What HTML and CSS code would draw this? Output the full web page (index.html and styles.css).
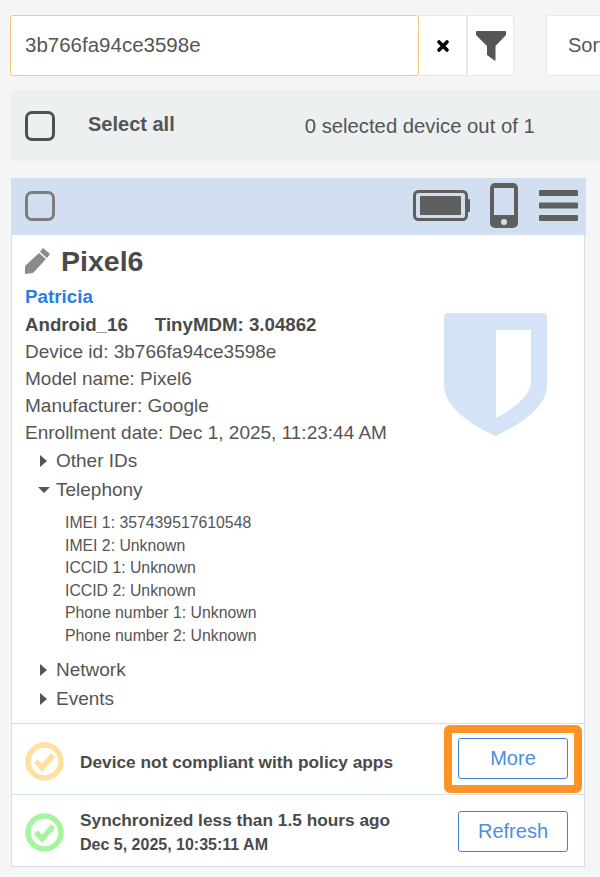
FILE: index.html
```html
<!DOCTYPE html>
<html lang="en">
<head>
    <meta charset="UTF-8">
    <meta name="viewport" content="width=device-width, initial-scale=1.0">
    <title>Devices</title>
    <link rel="stylesheet" href="styles.css">
</head>
<body>
    <div class="search-row">
        <input class="search-input" type="text" value="3b766fa94ce3598e">
        <button class="search-btn clear-btn">
            <svg width="14" height="14" viewBox="0 0 14 14"><path d="M3 3 L11 11 M11 3 L3 11" stroke="#000" stroke-width="3.6" stroke-linecap="round"/></svg>
        </button>
        <button class="search-btn filter-btn">
            <svg width="30" height="30" viewBox="0 0 30 30"><path d="M0 1 Q0 0 1 0 H29 Q30 0 30 1 V4 L19.500 15 V29 Q19.500 30 18.500 29.500 L11 24 V15 L0 4 Z" fill="#555"/></svg>
        </button>
        <div class="sort-box">Sort by</div>
    </div>

    <div class="select-bar">
        <span class="checkbox dark"></span>
        <strong class="select-all">Select all</strong>
        <span class="select-count">0 selected device out of 1</span>
    </div>

    <div class="card">
        <div class="card-header">
            <span class="checkbox"></span>
            <div class="header-icons">
                <svg class="battery-icon" width="57" height="31" viewBox="0 0 57 31"><rect x="1.500" y="1.500" width="52" height="28" rx="4" fill="none" stroke="#5f5f5f" stroke-width="3"/><rect x="7" y="6" width="41" height="19" fill="#5f5f5f"/><path d="M54 9 h2 q1 0 1 1 v11 q0 1 -1 1 h-2 z" fill="#5f5f5f"/></svg>
                <svg width="28" height="45" viewBox="0 0 28 45"><rect width="28" height="45" rx="5" fill="#5f5f5f"/><rect x="4" y="5" width="20" height="27" fill="#d2dff0"/><circle cx="14" cy="39" r="3" fill="#d2dff0"/></svg>
                <svg class="menu-icon" width="39" height="31" viewBox="0 0 39 31"><rect width="39" height="6" rx="1" fill="#5f5f5f"/><rect y="12.500" width="39" height="6" rx="1" fill="#5f5f5f"/><rect y="25" width="39" height="6" rx="1" fill="#5f5f5f"/></svg>
            </div>
        </div>

        <div class="card-body">
            <svg class="shield" width="103" height="123" viewBox="0 0 103 123"><path fill-rule="evenodd" d="M4 0 H99 Q103 0 103 4 V72 C103 95 75 112 51.500 123 C28 112 0 95 0 72 V4 Q0 0 4 0 Z M52 17 V105 C68 96 87 84 87 68 V17 Z" fill="#d5e3f6"/></svg>

            <h2 class="device-name">
                <svg width="25" height="26" viewBox="0 0 25 26"><path d="M18 0 L25 6 L22 10 L15 4 Z M14 5 L21 11 L8 25 L0 26 L0 18 Z" fill="#8a8a8a"/></svg>
                Pixel6
            </h2>
            <div class="user-name">Patricia</div>
            <div class="info-line info-bold"><span>Android_16</span><span>TinyMDM: 3.04862</span></div>
            <div class="info-line">Device id: 3b766fa94ce3598e</div>
            <div class="info-line">Model name: Pixel6</div>
            <div class="info-line">Manufacturer: Google</div>
            <div class="info-line">Enrollment date: Dec 1, 2025, 11:23:44 AM</div>

            <div class="section"><span class="arrow-right"></span>Other IDs</div>
            <div class="section"><span class="arrow-down"></span>Telephony</div>
            <ul class="section-items">
                <li>IMEI 1: 357439517610548</li>
                <li>IMEI 2: Unknown</li>
                <li>ICCID 1: Unknown</li>
                <li>ICCID 2: Unknown</li>
                <li>Phone number 1: Unknown</li>
                <li>Phone number 2: Unknown</li>
            </ul>
            <div class="section"><span class="arrow-right"></span>Network</div>
            <div class="section"><span class="arrow-right"></span>Events</div>
        </div>

        <div class="status-row">
            <svg class="status-icon" width="39" height="39" viewBox="0 0 39 39"><circle cx="19.500" cy="19.500" r="16.500" fill="#fff" stroke="#ffe0a0" stroke-width="5.500"/><path d="M11 19 L17 26 L28 13" fill="none" stroke="#ffe0a0" stroke-width="5.500"/></svg>
            <div class="status-text"><strong>Device not compliant with policy apps</strong></div>
            <button class="action-btn highlighted">More</button>
        </div>
        <div class="status-row">
            <svg class="status-icon" width="39" height="39" viewBox="0 0 39 39"><circle cx="19.500" cy="19.500" r="16.500" fill="#fff" stroke="#a5f5a0" stroke-width="5.500"/><path d="M11 19 L17 26 L28 13" fill="none" stroke="#a5f5a0" stroke-width="5.500"/></svg>
            <div class="status-text"><strong>Synchronized less than 1.5 hours ago</strong><br><strong class="sync-date">Dec 5, 2025, 10:35:11 AM</strong></div>
            <button class="action-btn">Refresh</button>
        </div>
    </div>
</body>
</html>
```

FILE: styles.css
```css
html, body {
    overflow: hidden;
}
body {
    font-family: "Liberation Sans", Arial, sans-serif;
    background-color: #f5f5f5;
    color: #555;
    margin: 0;
    width: 600px;
    height: 877px;
}
.search-row {
    display: flex;
    height: 61px;
    margin: 15px 0 14px 10px;
    width: 700px;
}
.search-input {
    box-sizing: border-box;
    flex: none;
    width: 409px;
    height: 61px;
    padding: 0 14px 2px;
    border: 1.5px solid #f8c77c;
    border-radius: 3px;
    font-family: inherit;
    font-size: 20.500px;
    color: #555;
    background: #fff;
    outline: none;
}
.search-btn {
    box-sizing: border-box;
    flex: none;
    height: 61px;
    padding: 0;
    background: #fff;
    border: 1px solid #e8e8e8;
    border-left: 0;
    display: flex;
    align-items: center;
    justify-content: center;
}
.clear-btn {
    width: 48px;
}
.filter-btn {
    width: 47px;
    border-left: 1px solid #e8e8e8;
    border-radius: 0 2px 2px 0;
}
.sort-box {
    box-sizing: border-box;
    flex: none;
    margin-left: 32px;
    width: 200px;
    padding: 0 21px;
    background: #fff;
    border: 1px solid #e8e8e8;
    border-radius: 3px;
    font-size: 20px;
    line-height: 59px;
}
.select-bar {
    display: flex;
    align-items: center;
    height: 71px;
    margin-left: 11px;
    padding-left: 14px;
    background-color: #ecf0f1;
}
.checkbox {
    box-sizing: border-box;
    width: 30px;
    height: 30px;
    border: 3px solid #7d7d7d;
    border-radius: 7px;
    flex: none;
}
.checkbox.dark {
    border-color: #4f4f4f;
}
.select-all {
    margin-left: 33px;
    margin-top: -3px;
    font-size: 20px;
}
.select-count {
    margin-left: 130px;
    margin-top: 2px;
    font-size: 20.300px;
}
.card {
    box-sizing: border-box;
    width: 574px;
    height: 689px;
    margin: 17px 0 0 11px;
    border: 1.5px solid #d2dff0;
    border-top: 0;
    background: #fff;
}
.card-header {
    box-sizing: border-box;
    display: flex;
    align-items: center;
    justify-content: space-between;
    height: 57px;
    margin: 0 -1.500px;
    padding: 0 8px 2px 14px;
    background-color: #d2dff0;
}
.header-icons {
    display: flex;
    align-items: center;
    gap: 19px;
}
.battery-icon {
    margin-right: 1px;
}
.menu-icon {
    margin-left: 2px;
}
.card-body {
    position: relative;
    height: 481px;
    padding: 7px 0 0 13px;
    border-bottom: 1.5px solid #d2dff0;
}
.shield {
    position: absolute;
    left: 431.500px;
    top: 78px;
}
.device-name {
    display: flex;
    align-items: center;
    gap: 11px;
    margin: 0;
    height: 38px;
    font-size: 28.500px;
    color: #4a4a4a;
}
.user-name {
    margin-top: 3px;
    height: 28px;
    line-height: 27px;
    font-size: 18.800px;
    font-weight: bold;
    color: #2a7de1;
}
.info-line {
    height: 27px;
    line-height: 27px;
    font-size: 19px;
}
.info-bold {
    display: flex;
    gap: 27px;
    font-size: 18.700px;
    font-weight: bold;
    color: #4a4a4a;
}
.section {
    display: flex;
    align-items: center;
    height: 29px;
    padding-left: 15px;
    font-size: 19px;
}
.arrow-right {
    width: 0;
    height: 0;
    margin-right: 9px;
    border-left: 7px solid #555;
    border-top: 6px solid transparent;
    border-bottom: 6px solid transparent;
}
.arrow-down {
    width: 0;
    height: 0;
    margin: 0 6px 0 -2px;
    border-top: 6px solid #555;
    border-left: 6px solid transparent;
    border-right: 6px solid transparent;
}
.section-items {
    list-style: none;
    margin: 0;
    padding: 8px 0 8px 40px;
    font-size: 15.800px;
    line-height: 22.500px;
}
.status-row {
    position: relative;
    display: flex;
    align-items: center;
    height: 70px;
    padding: 0 16px 0 13px;
    border-bottom: 1.5px solid #d2dff0;
}
.status-row:last-child {
    border-bottom: 0;
}
.status-icon {
    flex: none;
    margin-top: 5px;
}
.status-text {
    flex: 1;
    margin-left: 16px;
    margin-top: 5px;
    font-size: 17.300px;
    line-height: 24px;
    color: #4a4a4a;
}
.sync-date {
    font-size: 16px;
}
.action-btn {
    box-sizing: border-box;
    flex: none;
    width: 110px;
    height: 41px;
    margin-top: 2px;
    padding: 0;
    background: #fff;
    border: 1.5px solid #3f84d8;
    border-radius: 3px;
    font-family: inherit;
    font-size: 20px;
    color: #4a8fe0;
}
.highlighted {
    margin-top: -2px;
}
.highlighted::after {
    content: "";
    position: absolute;
    right: 2px;
    top: 1px;
    width: 122px;
    height: 52px;
    border: 8px solid #ff9326;
    border-radius: 6px;
}
```
